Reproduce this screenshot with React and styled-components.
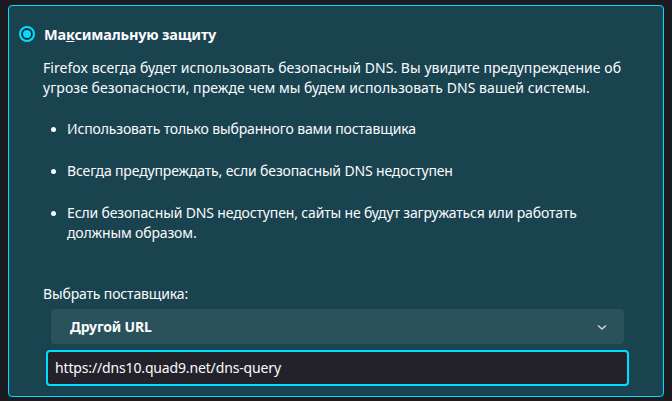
import React from 'react';
import styled, { createGlobalStyle } from 'styled-components';

const GlobalStyle = createGlobalStyle`
    html, body {
        margin: 0;
        padding: 0;
        background: #1c1b22;
        height: 100%;
    }
    body {
        font-family: 'Noto Sans', 'Open Sans', sans-serif;
        color: #fbfbfe;
    }
`;

const Page = styled.div`
    padding: 5px 8px 4px 8px;
`;

const Card = styled.section`
    background: #1a4350;
    border: 1px solid #00ddff;
    border-radius: 4px;
    padding: 18px 36px 10px 10px;
    display: flex;
    flex-direction: column;
`;

const TitleRow = styled.label`
    display: flex;
    align-items: center;
    gap: 9px;
    height: 20px;
`;

const Radio = styled.span`
    width: 16px;
    height: 16px;
    box-sizing: border-box;
    border-radius: 50%;
    border: 2px solid #00ddff;
    display: flex;
    align-items: center;
    justify-content: center;
    &::after {
        content: '';
        width: 8px;
        height: 8px;
        border-radius: 50%;
        background: #00ddff;
        box-shadow: 0 0 0 1px #1c1b22;
    }
`;

const Title = styled.span`
    font-size: 14.5px;
    font-weight: 700;
    letter-spacing: -0.2px;
`;

const Content = styled.div`
    padding-left: 24px;
    font-size: 14px;
    letter-spacing: -0.15px;
    line-height: 20px;
`;

const Description = styled.p`
    margin: 14px 0 0 0;
    letter-spacing: 0.05px;
`;

const Bullets = styled.ul`
    margin: 21px 0 0 0;
    padding-left: 24px;
    display: flex;
    flex-direction: column;
    gap: 22px;
    li::marker {
        font-size: 13px;
    }
`;

const Label = styled.div`
    margin-top: 41px;
`;

const Select = styled.div`
    margin: 5px 3px 0 8px;
    height: 35px;
    border-radius: 4px;
    background: #2a525b;
    display: flex;
    align-items: center;
    justify-content: space-between;
    padding: 0 16px 0 19px;
    font-weight: 700;
`;

const UrlInput = styled.div`
    margin: 6px -2px 0 3px;
    height: 36px;
    box-sizing: border-box;
    border: 2px solid #00ddff;
    border-radius: 4px;
    background: #23222b;
    display: flex;
    align-items: center;
    padding-left: 7px;
`;

const Chevron = () => (
    <svg width="12" height="12" viewBox="0 0 12 12" fill="none">
        <path d="M2 4.5 L6 8 L10 4.5" stroke="#d6d6dc" strokeWidth="1.5" strokeLinejoin="round" />
    </svg>
);

export default function App() {
    return (
        <Page>
            <GlobalStyle />
            <Card>
                <TitleRow>
                    <Radio />
                    <Title>
                        Ма<u>к</u>симальную защиту
                    </Title>
                </TitleRow>
                <Content>
                    <Description>
                        Firefox всегда будет использовать безопасный DNS. Вы увидите предупреждение об угрозе
                        безопасности, прежде чем мы будем использовать DNS вашей системы.
                    </Description>
                    <Bullets>
                        <li>Использовать только выбранного вами поставщика</li>
                        <li>Всегда предупреждать, если безопасный DNS недоступен</li>
                        <li>Если безопасный DNS недоступен, сайты не будут загружаться или работать должным образом.</li>
                    </Bullets>
                    <Label>Выбрать поставщика:</Label>
                    <Select>
                        <span>Другой URL</span>
                        <Chevron />
                    </Select>
                    <UrlInput>https://dns10.quad9.net/dns-query</UrlInput>
                </Content>
            </Card>
        </Page>
    );
}
